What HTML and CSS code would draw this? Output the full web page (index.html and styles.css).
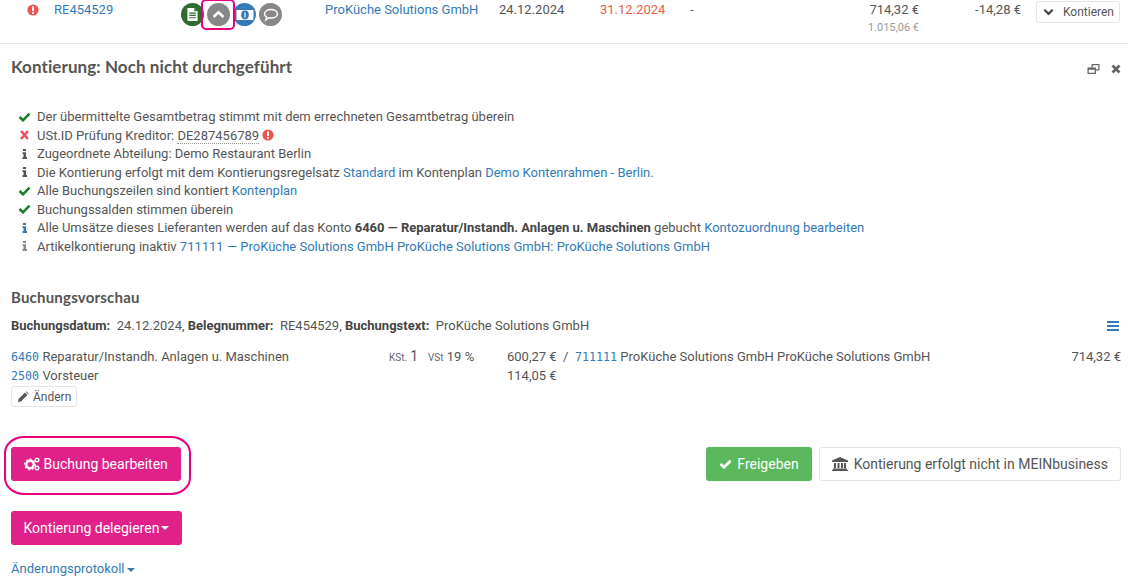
FILE: index.html
```html
<!DOCTYPE html>
<html lang="de">
<head>
<meta charset="utf-8">
<title>Kontierung</title>
<link rel="stylesheet" href="styles.css">
</head>
<body>
<div class="row-top">
  <div class="c-flag"><svg class="ic" viewBox="0 0 12 12"><circle cx="6" cy="6" r="5.6" fill="#ef5350"/><rect x="5" y="2.4" width="2" height="4.6" fill="#fff"/><rect x="5" y="8" width="2" height="1.8" fill="#fff"/></svg></div>
  <div class="c-no"><a href="#">RE454529</a></div>
  <div class="c-icons">
    <span class="round green"><svg viewBox="0 0 14 16" width="13" height="15"><path d="M1.500 1h7.500l3.500 3.500V15h-11z" fill="#fff"/><path d="M9 1v3.500h3.500" fill="#2e6b2e"/><path d="M3.500 6.500h7M3.500 9h7M3.500 11.500h7" stroke="#2e6b2e" stroke-width="1.200"/></svg></span>
    <span class="round grey active"><svg viewBox="0 0 14 10" width="13" height="9"><path d="M1.500 7.800 7 2.500l5.500 5.300" fill="none" stroke="#fff" stroke-width="2.800"/></svg></span>
    <span class="round blue"><svg viewBox="0 0 18 12" width="18" height="12"><rect x="0.500" y="1" width="17" height="10" fill="#fff"/><ellipse cx="9" cy="6" rx="3.800" ry="4.400" fill="#337ab7"/><rect x="8.400" y="3.500" width="1.200" height="5" fill="#fff"/></svg></span>
    <span class="round grey"><svg viewBox="0 0 16 14" width="16" height="14"><path d="M8 1.500c3.600 0 6.500 1.900 6.500 4.300S11.600 10 8 10c-.8 0-1.500-.1-2.200-.2L2.800 12l.8-3C2.300 8.200 1.500 7.100 1.500 5.800 1.500 3.400 4.400 1.500 8 1.500z" fill="none" stroke="#fff" stroke-width="1.400"/></svg></span>
  </div>
  <div class="c-vendor"><a href="#">ProKüche Solutions GmbH</a></div>
  <div class="c-date">24.12.2024</div>
  <div class="c-due">31.12.2024</div>
  <div class="c-dash">-</div>
  <div class="c-amount">714,32 €<small>1.015,06 €</small></div>
  <div class="c-skonto">-14,28 €</div>
  <div class="c-action"><button class="btn btn-xs btn-kont"><svg class="ic-chev" viewBox="0 0 12 8"><path d="M1.500 1.500 6 6l4.500-4.500" fill="none" stroke="#444" stroke-width="2.400"/></svg>Kontieren</button></div>
</div>

<main class="panel">
  <header class="panel-head">
    <h2>Kontierung: Noch nicht durchgeführt</h2>
    <div class="panel-tools">
      <svg viewBox="0 0 13 12" width="13" height="12"><path d="M4.500 1h8v6.500H9V11H.5V4.500h4zM5.800 2.200v2.300H9v1.800h2.300V2.200zM1.700 6.800v3h6v-3z" fill="#666" fill-rule="evenodd"/></svg>
      <svg viewBox="0 0 10 10" width="10" height="10"><path d="M1.500 1.500l7 7M8.500 1.500l-7 7" stroke="#666" stroke-width="2.800"/></svg>
    </div>
  </header>

  <ul class="checks">
    <li><svg class="ci" viewBox="0 0 13 10"><path d="M1.500 5 5 8.300 11.500 1.700" fill="none" stroke="#1a7f2a" stroke-width="2.600"/></svg>Der übermittelte Gesamtbetrag stimmt mit dem errechneten Gesamtbetrag überein</li>
    <li><svg class="ci" viewBox="0 0 13 10"><path d="M3 1l7 8M10 1 3 9" stroke="#ef5361" stroke-width="2.600"/></svg>USt.ID Prüfung Kreditor: <span class="dotted">DE287456789</span> <svg class="ic-inline" viewBox="0 0 12 12"><circle cx="6" cy="6" r="5.600" fill="#ef5350"/><rect x="5" y="2.400" width="2" height="4.600" fill="#fff"/><rect x="5" y="8" width="2" height="1.800" fill="#fff"/></svg></li>
    <li><svg class="ci" viewBox="0 0 13 10"><path d="M5 0h3v2H5zM4.500 3.300H8V8h1v2H4.500V8h1V5h-1z" fill="#555"/></svg>Zugeordnete Abteilung: Demo Restaurant Berlin</li>
    <li><svg class="ci" viewBox="0 0 13 10"><path d="M5 0h3v2H5zM4.500 3.300H8V8h1v2H4.500V8h1V5h-1z" fill="#555"/></svg>Die Kontierung erfolgt mit dem Kontierungsregelsatz <a href="#">Standard</a> im Kontenplan <a href="#">Demo Kontenrahmen - Berlin.</a></li>
    <li><svg class="ci" viewBox="0 0 13 10"><path d="M1.500 5 5 8.300 11.500 1.700" fill="none" stroke="#1a7f2a" stroke-width="2.600"/></svg>Alle Buchungszeilen sind kontiert <a href="#">Kontenplan</a></li>
    <li><svg class="ci" viewBox="0 0 13 10"><path d="M1.500 5 5 8.300 11.500 1.700" fill="none" stroke="#1a7f2a" stroke-width="2.600"/></svg>Buchungssalden stimmen überein</li>
    <li><svg class="ci" viewBox="0 0 13 10"><path d="M5 0h3v2H5zM4.500 3.300H8V8h1v2H4.500V8h1V5h-1z" fill="#337ab7"/></svg>Alle Umsätze dieses Lieferanten werden auf das Konto <b>6460 — Reparatur/Instandh. Anlagen u. Maschinen</b> gebucht <a href="#">Kontozuordnung bearbeiten</a></li>
    <li><svg class="ci" viewBox="0 0 13 10"><path d="M5 0h3v2H5zM4.500 3.300H8V8h1v2H4.500V8h1V5h-1z" fill="#888"/></svg>Artikelkontierung inaktiv <a href="#">711111 — ProKüche Solutions GmbH ProKüche Solutions GmbH: ProKüche Solutions GmbH</a></li>
  </ul>

  <section class="preview">
    <h3>Buchungsvorschau</h3>
    <div class="meta">
      <span><b>Buchungsdatum:</b>&nbsp; 24.12.2024, <b>Belegnummer:</b>&nbsp; RE454529, <b>Buchungstext:</b>&nbsp; ProKüche Solutions GmbH</span>
      <svg class="bars" viewBox="0 0 12 10"><path d="M0 1h12M0 5h12M0 9h12" stroke="#337ab7" stroke-width="1.800"/></svg>
    </div>
    <div class="entries">
      <div class="e-acc"><a class="code" href="#">6460</a> Reparatur/Instandh. Anlagen u. Maschinen</div>
      <div class="e-tax"><span class="mini">KSt.</span> <span class="big">1</span></div>
      <div class="e-vat"><span class="mini">VSt</span> 19 %</div>
      <div class="e-val">600,27 € &nbsp;/&nbsp; <a class="code" href="#">711111</a> ProKüche Solutions GmbH ProKüche Solutions GmbH</div>
      <div class="e-sum">714,32 €</div>
      <div class="e-acc"><a class="code" href="#">2500</a> Vorsteuer</div>
      <div class="e-tax"></div>
      <div class="e-vat"></div>
      <div class="e-val">114,05 €</div>
      <div class="e-sum"></div>
    </div>
    <button class="btn btn-xs btn-edit"><svg class="ic-pen" viewBox="0 0 12 12"><path d="M1 11l.6-3L8 1.600 10.400 4 4 10.400zM8.800.8l.8-.4 2 2-.4.800z" fill="#555"/></svg>Ändern</button>
  </section>

  <div class="actions">
    <div class="ring-wrap">
      <button class="btn btn-pink"><svg class="ic-gears" viewBox="0 0 16 14"><circle cx="6" cy="7.500" r="3.700" fill="none" stroke="#fff" stroke-width="2.400"/><circle cx="6" cy="7.500" r="5.300" fill="none" stroke="#fff" stroke-width="1.200" stroke-dasharray="2 2"/><circle cx="13" cy="3" r="1.800" fill="none" stroke="#fff" stroke-width="1.400"/><circle cx="13" cy="11" r="1.800" fill="none" stroke="#fff" stroke-width="1.400"/></svg>Buchung bearbeiten</button>
      <span class="ring"></span>
    </div>
    <div class="actions-right">
      <button class="btn btn-green"><svg class="ic-check" viewBox="0 0 13 10"><path d="M1.500 5 5 8.300 11.500 1.700" fill="none" stroke="#fff" stroke-width="2.800"/></svg>Freigeben</button>
      <button class="btn btn-white"><svg class="ic-bank" viewBox="0 0 16 14"><path d="M8 0l8 3.500V5H0V3.500zM2 6h2v5H2zM5.500 6h2v5h-2zM9 6h2v5H9zM12 6h2v5h-2zM1 11.500h14V13H1zM0 13h16v1H0z" fill="#555"/></svg>Kontierung erfolgt nicht in MEINbusiness</button>
    </div>
  </div>

  <button class="btn btn-pink btn-delegate">Kontierung delegieren<span class="caret"></span></button>

  <a class="log" href="#">Änderungsprotokoll<span class="caret"></span></a>
</main>
</body>
</html>
```
FILE: styles.css
```css
* { box-sizing: border-box; }
html, body { margin: 0; padding: 0; }
body {
  font-family: Roboto, "Liberation Sans", sans-serif;
  font-size: 13px;
  line-height: 18.57px;
  color: #555;
  background: #fff;
  height: 588px;
  overflow: hidden;
}
a { color: #337ab7; text-decoration: none; }
b { font-weight: 700; color: #444; }
button { font-family: inherit; cursor: pointer; }

.row-top {
  display: grid;
  grid-template-columns: 54px 127px 144px 174px 101px 90px 130px 99px 102px 1fr;
  height: 44px;
  border-bottom: 1px solid #e7e7e7;
  padding: 1px 8px 0 0;
}
.c-flag { padding-left: 27px; }
.ic { width: 12px; height: 12px; margin-top: 3px; display: block; }
.c-icons { display: flex; padding-top: 2px; align-items: flex-start; }
.round {
  width: 23px; height: 23px; border-radius: 50%;
  display: inline-flex; align-items: center; justify-content: center;
  flex: none;
}
.round + .round { margin-left: 3px; }
.round.green { background: #2e6b2e; }
.round.grey { background: #888; }
.round.blue { background: #337ab7; }
.round.active { position: relative; }
.round.active::after {
  content: "";
  position: absolute;
  left: -6px; top: -4px; right: -5px; bottom: -4px;
  border: 2px solid #e6007e;
  border-radius: 5px;
}
.c-due { color: #e8604c; }
.c-amount { text-align: right; color: #555; }
.c-amount small { display: block; font-size: 11px; color: #999; line-height: 16px; }
.c-skonto { text-align: right; }
.c-action { display: flex; justify-content: flex-end; align-items: flex-start; }

.btn {
  display: inline-flex; align-items: center;
  border-radius: 3px;
  font-size: 14px;
  line-height: 20px;
  padding: 6px 12px;
  border: 1px solid transparent;
  height: 34px;
}
.btn-xs {
  font-size: 12px;
  height: 21px;
  padding: 0 5px;
  background: #fff;
  border-color: #e5e5e5;
  color: #555;
}
.btn-kont { height: 22px; width: 84px; }
.ic-chev { width: 12px; height: 8px; margin: 0 9px 0 1px; }

.panel { padding: 0 7px 0 11px; }
.panel-head { display: flex; justify-content: space-between; align-items: center; height: 47px; }
.panel-head h2 {
  margin: 0;
  font-family: Lato, "Open Sans", sans-serif;
  font-size: 17px;
  font-weight: 700;
  letter-spacing: 0.08px;
  color: #555;
}
.panel-tools { display: flex; align-items: center; gap: 11px; padding-top: 2px; }

.checks { list-style: none; margin: 17px 0 0; padding: 0; }
.checks li { padding-left: 7px; display: block; height: 18.57px; white-space: nowrap; }
.ci { width: 13px; height: 10px; margin-right: 6px; display: inline-block; vertical-align: -0.5px; }
.dotted { border-bottom: 1px dotted #999; }
.ic-inline { width: 12px; height: 12px; vertical-align: -1.500px; }

.preview { margin-top: 30px; }
.preview h3 {
  margin: 0;
  font-family: Lato, "Open Sans", sans-serif;
  font-size: 15px;
  font-weight: 700;
  line-height: 20px;
  letter-spacing: 0.2px;
  color: #555;
}
.meta { display: flex; justify-content: space-between; align-items: center; margin-top: 10px; }
.bars { width: 12px; height: 10px; margin-right: 2px; }
.entries {
  display: grid;
  grid-template-columns: 378px 39px 79px 564px 1fr;
  grid-auto-rows: 18.57px;
  margin-top: 13px;
}
.code { font-family: "DejaVu Sans Mono", "Liberation Mono", monospace; font-size: 11.7px; line-height: 1; }
.mini { font-size: 10px; color: #667; line-height: 1; }
.big { font-size: 14px; line-height: 1; }
.e-sum { text-align: right; }
.btn-edit { margin-top: 1px; height: 21px; padding: 0 5px; }
.ic-pen { width: 12px; height: 12px; margin-right: 4px; }

.actions { display: flex; justify-content: space-between; margin-top: 39px; }
.ring-wrap { position: relative; }
.ring {
  position: absolute;
  left: -7px; top: -11px; right: -10px; bottom: -14px;
  border: 2px solid #e6007e;
  border-radius: 20px / 17px;
}
.btn-pink { background: #e0218a; color: #fff; font-size: 14px; padding-left: 11.5px; }
.ic-gears { width: 16px; height: 14px; margin-right: 4px; }
.actions-right { display: flex; gap: 7px; }
.btn-green { background: #5cb85c; color: #fff; }
.ic-check { width: 13px; height: 10px; margin-right: 5px; }
.btn-white { background: #fff; border-color: #e5e5e5; color: #555; }
.ic-bank { width: 16px; height: 14px; margin-right: 6px; }
.btn-delegate { margin-top: 30px; display: flex; }
.caret {
  display: inline-block;
  width: 0; height: 0;
  margin-left: 2px;
  border-top: 4px solid currentColor;
  border-left: 4px solid transparent;
  border-right: 4px solid transparent;
  vertical-align: middle;
}
.log { display: block; margin-top: 15px; }
```
